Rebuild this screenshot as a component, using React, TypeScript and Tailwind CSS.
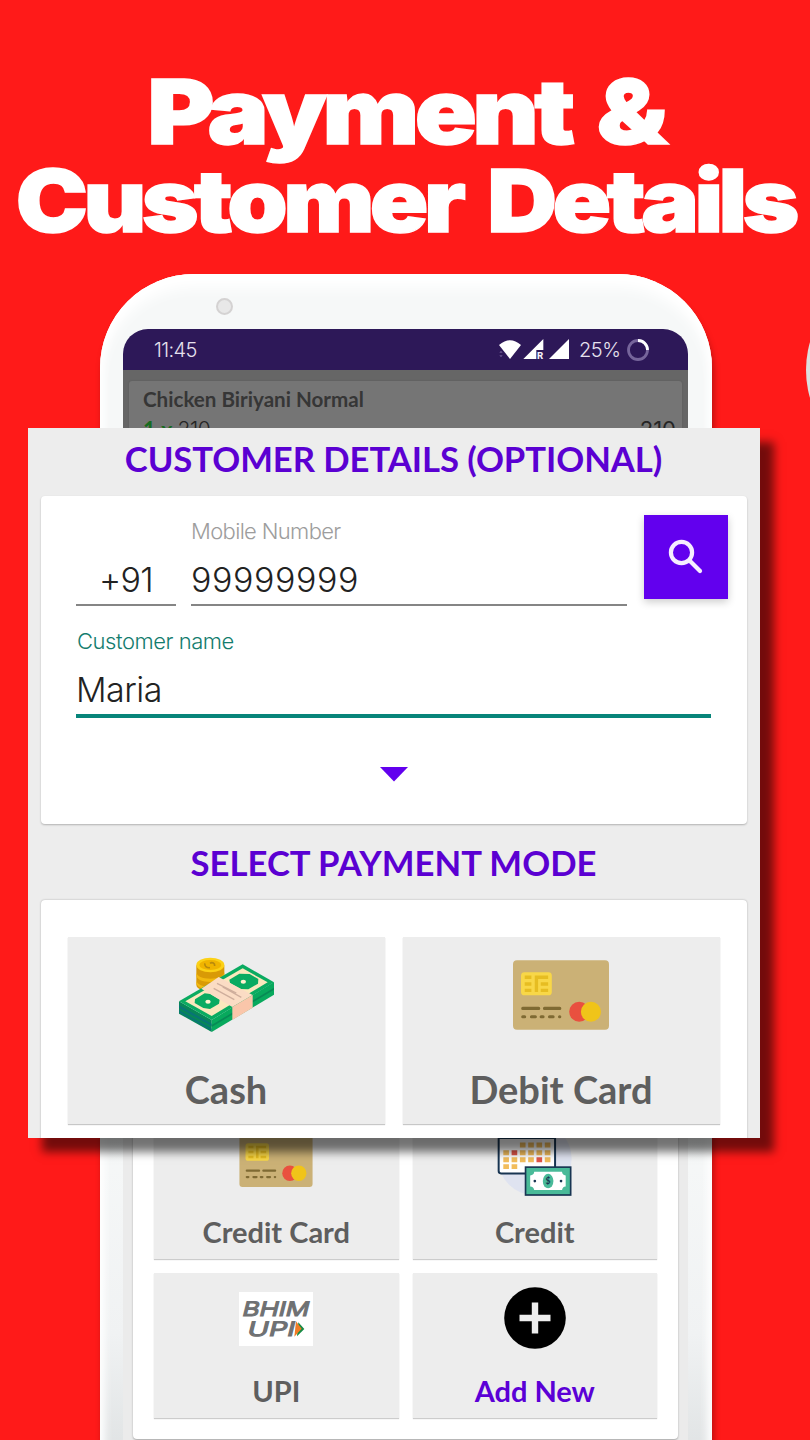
import type { ReactNode } from "react";

function CardIcon({ className }: { className: string }) {
  return (
    <svg viewBox="69 60 287 208" className={className}>
      <rect x="69" y="60" width="287" height="208" rx="12" fill="#cbb176" />
      <rect x="93" y="96" width="92" height="69" rx="10" fill="#f8d748" />
      <g stroke="#e6bd22" strokeWidth="10" fill="none">
        <path d="M104 111h20M104 131h20M104 150h20M152 131h22M152 150h22M139 155v-44h35" />
      </g>
      <g stroke="#7f6a33" strokeWidth="9" strokeLinecap="round">
        <path d="M98 204h48M163 204h46M98 229h6M124 229h12M153 229h6M178 229h11M208 229h1" />
      </g>
      <circle cx="267" cy="214" r="30" fill="#e9503f" />
      <circle cx="302" cy="214" r="30" fill="#f0c419" />
    </svg>
  );
}

function CashIcon() {
  return (
    <svg viewBox="0 0 390 330" className="mr-[3px] h-[110px] w-[130px]">
      <path d="M109 76v58c0 12 19 20 42 20s42-8 42-20V76z" fill="#d99a06" />
      <path d="M109 96c0 13 19 20 42 20s42-7 42-20v10c0 13-19 20-42 20s-42-7-42-20zM109 120c0 13 19 20 42 20s42-7 42-20v8c0 13-19 20-42 20s-42-7-42-20z" fill="#f2b90f" />
      <ellipse cx="151" cy="75" rx="42" ry="22" fill="#fcd116" />
      <ellipse cx="151" cy="75" rx="33" ry="15" fill="#f0b400" />
      <path d="M135 70c-3 8 5 14 15 13M150 70c7-5 15 0 14 8" stroke="#b98a0c" strokeWidth="5" fill="none" />
      <path d="M57 184v37l98 55v-36z" fill="#078658" />
      <path d="M57 196l98 55 0 7-98-55zM57 211l98 55v6l-98-55z" fill="#087477" />
      <path d="M155 240v36l187-112v-38z" fill="#08a95d" />
      <path d="M155 255l187-112v6L155 261z" fill="#078a55" />
      <path d="M57 184L248 73l94 54-187 113z" fill="#0aab61" />
      <path d="M76 184L248 85l75 42-168 101z" fill="#fbe8bd" />
      <path d="M105 178l29-18 17 2 28 17-2 12-27 16-20-3-26-15z" fill="#0aab61" />
      <path d="M208 119l30-18 31 1 26 15-1 14-29 17-24-1-31-18z" fill="#0aab61" />
      <path d="M124 146l52-35 102 54-61 36z" fill="#fbdcc4" />
      <path d="M217 201l61-36v38l-61 37z" fill="#fac6aa" />
      <path d="M171 130l58 29M161 145l62 34M188 141l56 31" stroke="#cfae9c" strokeWidth="4" />
      <ellipse cx="144" cy="185" rx="8" ry="6" fill="#fff2cf" />
      <ellipse cx="250" cy="125" rx="8" ry="6" fill="#fff2cf" />
    </svg>
  );
}

function CreditIcon() {
  return (
    <svg viewBox="290 40 226 220" className="h-[73px] w-[75px]">
      <circle cx="404" cy="147" r="111" fill="#dfe3f0" />
      <rect x="295" y="52" width="170" height="140" rx="7" fill="#fff" stroke="#183552" strokeWidth="6" />
      <path d="M295 86h170" stroke="#183552" strokeWidth="5" />
      <g fill="#f2bd5c">
        <path d="M359 99h17v15h-17zM384 99h17v15h-17zM409 99h17v15h-17zM434 99h17v15h-17zM309 122h17v15h-17zM359 122h17v15h-17zM384 122h17v15h-17zM409 122h17v15h-17zM434 122h17v15h-17zM309 143h17v15h-17zM334 143h17v15h-17zM359 143h17v15h-17zM384 143h17v15h-17zM434 143h17v15h-17zM309 164h17v15h-17zM334 164h17v15h-17z" />
      </g>
      <path d="M334 122h17v15h-17zM409 143h17v15h-17z" fill="#df5548" />
      <rect x="376" y="173" width="136" height="84" fill="#49ba98" stroke="#183552" strokeWidth="5" />
      <path d="M402 187h84q0 9 11 11v33q-10 1-11 11h-84q-1-10-12-11v-33q12-1 12-11z" fill="#fff" />
      <ellipse cx="444" cy="215" rx="16" ry="22" fill="#49ba98" />
      <circle cx="404" cy="215" r="4" fill="#183552" />
      <circle cx="483" cy="215" r="4" fill="#183552" />
      <text x="444" y="224" textAnchor="middle" fontSize="26" fontWeight="700" fontFamily="Lato, sans-serif" fill="#183552">$</text>
    </svg>
  );
}

function BhimIcon() {
  return (
    <svg viewBox="447 93 222 162" className="h-[54px] w-[74px]">
      <path d="M447 93h222v162H447z" fill="#fff" />
      <g fill="#6f7173" stroke="#6f7173" strokeWidth="3" fontFamily="Inter, sans-serif" fontWeight="400" fontSize="60">
        <text transform="translate(454 166) skewX(-14)" textLength="200" lengthAdjust="spacingAndGlyphs">BHIM</text>
        <text transform="translate(469 226) skewX(-14)" textLength="142" lengthAdjust="spacingAndGlyphs">UPI</text>
      </g>
      <path d="M625 184l18 20-22 22z" fill="#168b45" />
      <path d="M618 181l17 22-22 24z" fill="#f07c25" />
    </svg>
  );
}

function AddIcon() {
  return (
    <svg viewBox="0 0 62 62" className="h-[62px] w-[62px]">
      <circle cx="31" cy="31" r="30.8" fill="#000" />
      <path d="M31 15.500v31M15.500 31h31" stroke="#eee" strokeWidth="6.400" />
    </svg>
  );
}

function SignalIcons() {
  return (
    <svg viewBox="50 215 225 75" className="h-[25px] w-[75px]">
      <path d="M56 239q33-29 66 0l-33 42z" fill="#fff" />
      <path d="M57 262l5-6 5 6zM57 270l5 6 5-6z" fill="#6d5a92" />
      <path d="M189 221v33h-21v27h-39z" fill="#fff" />
      <text x="170" y="281" fontSize="29" fontWeight="800" fontFamily="Roboto, sans-serif" fill="#f4f0fa">R</text>
      <path d="M266 221v60h-60z" fill="#fff" />
    </svg>
  );
}

function SmallTile({ icon, label, top, labelTop, accent }: { icon: ReactNode; label: ReactNode; top: string; labelTop: string; accent?: boolean }) {
  return (
    <div className={`flex h-[145px] flex-col items-center bg-[#ededed] shadow-[0_1px_1px_rgba(0,0,0,0.2)] ${top}`}>
      <div className="flex h-[73px] items-end justify-center">{icon}</div>
      <div className={`text-[29px] leading-[36px] font-bold whitespace-nowrap ${labelTop} ${accent ? "text-[#5b00d6]" : "text-[#5e5e5e]"}`}>{label}</div>
    </div>
  );
}

function LargeTile({ icon, label }: { icon: ReactNode; label: ReactNode }) {
  return (
    <div className="flex h-[187px] flex-col items-center bg-[#ededed] pr-[1px] shadow-[0_1px_1px_rgba(0,0,0,0.22)]">
      <div className="flex h-[116px] items-center justify-center">{icon}</div>
      <div className="mt-[13px] text-[38px] leading-[47px] font-bold whitespace-nowrap text-[#5e5e5e]">{label}</div>
    </div>
  );
}

function CheckoutPanel() {
  return (
    <section className="absolute top-[428px] left-[28px] h-[710px] w-[732px] overflow-hidden bg-[#ededed] font-['Lato',sans-serif]">
      <h2 className="h-[68px] pr-px text-center text-[34.700px] leading-[62px] font-bold whitespace-nowrap text-[#5b00d2]">
        <span className="tracking-[-0.080px]">CUSTOMER DETAILS (OPTIONAL)</span>
      </h2>
      <div className="mx-[13px] h-[328px] rounded-[4px] bg-white pr-[19px] pl-[35px] font-['Inter',sans-serif] font-light shadow-[0_1px_2px_rgba(0,0,0,0.25)]">
        <div className="flex pt-[19px]">
          <div className="mt-[37px] h-[54px] w-[100px] border-b-2 border-[#858585] text-center text-[34px] leading-[55px] text-[#222]">
            <span className="tracking-[-0.700px]">+91</span>
          </div>
          <div className="ml-[15px] w-[436px]">
            <div className="h-[37px] text-[22px] leading-[32px] tracking-[-0.650px] text-[#9d9d9d]">Mobile Number</div>
            <div className="h-[54px] border-b-2 border-[#858585] text-[34px] leading-[55px] tracking-[0.550px] text-[#222]">99999999</div>
          </div>
          <button className="ml-[17px] flex h-[84px] w-[84px] items-center justify-center bg-[#6200ee] shadow-[0_3px_8px_rgba(0,0,0,0.2)]">
            <svg viewBox="0 0 36 36" className="h-[36px] w-[36px]" fill="none" stroke="#f6edff" strokeWidth="4.200" strokeLinecap="round">
              <circle cx="13.500" cy="13.500" r="10.600" />
              <path d="M22 22l10 10" />
            </svg>
          </button>
        </div>
        <div className="w-[635px]">
          <div className="mt-[19px] h-[32px] pl-px text-[22px] leading-[32px] tracking-[-0.450px] text-[#137c6e]">Customer name</div>
          <div className="h-[61px] border-b-4 border-[#07857a] pt-[5px] text-[34px] leading-[56px] tracking-[-0.500px] text-[#222]">Maria</div>
          <svg viewBox="0 0 28 15" className="mx-auto mt-[49px] h-[15px] w-[28px]">
            <path d="M0 0h28L14 14.500z" fill="#6200ee" />
          </svg>
        </div>
      </div>
      <h2 className="h-[76px] pr-px text-center text-[34.700px] leading-[77px] font-bold whitespace-nowrap text-[#5b00d2]">
        <span>SELECT PAYMENT MODE</span>
      </h2>
      <div className="mx-[13px] grid h-[260px] grid-cols-2 gap-[18px] rounded-t-[4px] bg-white px-[27px] pt-[37px] shadow-[0_0_2px_rgba(0,0,0,0.3)]">
        <LargeTile icon={<CashIcon />} label="Cash" />
        <LargeTile icon={<CardIcon className="mr-px h-[70px] w-[96px]" />} label="Debit Card" />
      </div>
    </section>
  );
}

function Phone() {
  return (
    <div className="ml-[100px] h-[1180px] w-[612px] rounded-t-[94px] bg-[linear-gradient(#f6f8f8_0,#f6f8f8_860px,#f0f2f3_1060px,#e0e3e4_1180px)] px-[23px] shadow-[inset_0_14px_14px_0px_#fff,inset_0_0_10px_3px_#fff,2px_8px_6px_rgba(80,0,0,0.4)]">
      <div className="h-[55px] pt-[24px] pl-[93px]">
        <div className="h-[17px] w-[17px] rounded-full border-2 border-[#d4d2d2] bg-[#e8e8e8]" />
      </div>
      <div className="h-[1125px] w-[565px] overflow-hidden rounded-t-[25px] bg-[#ebebeb]">
        <div className="flex h-[41px] items-center bg-[#2d1858] pl-[31px] font-['Inter',sans-serif] text-[20px] font-light text-[#e6e1ee]">
          <span className="w-[343px] tracking-[-0.600px]">11:45</span>
          <SignalIcons />
          <span className="ml-[7px] w-[47px] tracking-[-0.500px]">25%</span>
          <svg viewBox="0 0 24 24" className="h-[24px] w-[24px]" fill="none" strokeWidth="2.800">
            <circle cx="12" cy="12" r="9.500" stroke="#76659b" />
            <path d="M12 2.500A9.500 9.500 0 0 1 21.500 12" stroke="#fff" />
          </svg>
        </div>
        <div className="h-[615px] bg-[#666] px-[6px] pt-[11px]">
          <div className="h-[200px] rounded-[3px] bg-[#757575] pt-[4px] pr-[6px] pl-[14px] font-['Lato',sans-serif] shadow-[0_0_2px_rgba(0,0,0,0.15)]">
            <div className="text-[20.600px] leading-[28px] font-bold text-[#363636]">Chicken Biriyani Normal</div>
            <div className="flex justify-between text-[22px] leading-[33px] text-[#252525]">
              <div className="flex gap-[1px]">
                <b className="text-[#176b20]">1 x</b>
                <span className="ml-[4px] font-['Inter',sans-serif] text-[21px] font-light tracking-[-0.500px] line-through">210</span>
              </div>
              <span className="font-['Inter',sans-serif]">210</span>
            </div>
          </div>
        </div>
        <div className="ml-[10px] h-[454px] w-[545px] rounded-b-[4px] bg-white pt-[129px] pr-[21px] pl-[21px] font-['Lato',sans-serif] shadow-[0_1px_2px_rgba(0,0,0,0.3)]">
          <div className="grid grid-cols-2 gap-[14px]">
            <SmallTile icon={<CardIcon className="h-[53px] w-[74px]" />} label="Credit Card" top="pt-0" labelTop="mt-[27px]" />
            <SmallTile icon={<CreditIcon />} label="Credit" top="pt-[9px]" labelTop="mt-[18px]" />
            <SmallTile icon={<BhimIcon />} label="UPI" top="pt-0" labelTop="mt-[27px]" />
            <SmallTile icon={<AddIcon />} label="Add New" top="pt-[3px]" labelTop="mt-[24px]" accent />
          </div>
        </div>
      </div>
    </div>
  );
}

export default function App() {
  return (
    <main className="relative h-[1440px] w-[810px] overflow-hidden bg-[#ff1a19]">
      <h1 className="flex h-[274px] flex-col items-center pt-[68px] font-['Inter',sans-serif] font-black whitespace-nowrap text-white [-webkit-text-stroke:1.500px_white]">
        <span className="h-[88px] scale-x-[1.140] text-[90px] leading-[88px] tracking-[-4.100px] [word-spacing:9px]">Payment &amp;</span>
        <span className="h-[88px] scale-x-[1.112] text-[87px] leading-[89px] tracking-[-4.100px] [word-spacing:10px]">Customer Details</span>
      </h1>
      <Phone />
      <div className="absolute top-[428px] left-[28px] h-[710px] w-[732px] shadow-[14px_14px_9px_rgba(0,0,0,0.55)]" />
      <CheckoutPanel />
      <div className="absolute top-[270px] left-[806px] h-[200px] w-[200px] rounded-full bg-[#dedede]" />
    </main>
  );
}
